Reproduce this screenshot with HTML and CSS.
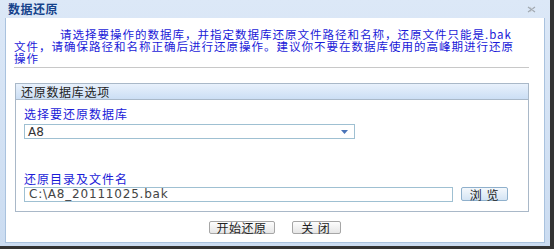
FILE: index.html
```html
<!DOCTYPE html>
<html lang="zh-CN">
  <head>
    <meta charset="UTF-8" />
    <title>数据还原</title>
    <link rel="stylesheet" href="styles.css">
  </head>
  <body>
    <div class="window">
      <div class="title-bar">
        <span class="title">数据还原</span>
        <span class="close">
          <svg width="9" height="7" viewBox="0 0 9 7">
            <path d="M1 1 L8 6 M8 1 L1 6" stroke="#a0a8b0" stroke-width="1.2" fill="none" />
            <path d="M3 1 L6 3.5 L3 6" stroke="#c8ccd0" stroke-width="0.8" fill="none" />
          </svg>
        </span>
      </div>
      <div class="body">
        <div class="intro">
          <div class="intro-line"><span class="indent"></span>请选择要操作的数据库，并指定数据库还原文件路径和名称，还原文件只能是.bak</div>
          <div class="intro-line">文件，请确保路径和名称正确后进行还原操作。建议你不要在数据库使用的高峰期进行还原</div>
          <div class="intro-line">操作</div>
        </div>
        <hr class="sep" />
        <div class="panel">
          <div class="panel-header">还原数据库选项</div>
          <div class="panel-body">
            <label class="field-label">选择要还原数据库</label>
            <div class="select">
              <span>A8</span>
              <svg class="arrow" width="7" height="4" viewBox="0 0 7 4">
                <path d="M0 0 H7 L3.5 4 Z" fill="#4a74b8" />
              </svg>
            </div>
            <label class="field-label path-label">还原目录及文件名</label>
            <div class="path-row">
              <div class="text-input">C:\A8_20111025.bak</div>
              <button class="btn browse">浏 览</button>
            </div>
          </div>
        </div>
        <div class="actions">
          <button class="btn action">开始还原</button>
          <button class="btn action close-btn">关 闭</button>
        </div>
      </div>
    </div>
  </body>
</html>
```

FILE: styles.css
```css
body {
  margin: 0;
  background-color: #333;
  font-family: "Noto Sans CJK SC", sans-serif;
  font-size: 12px;
}
.window {
  width: 550px;
  height: 246px;
  background: linear-gradient(#dce8f7, #cbdcf1);
  display: flex;
  flex-direction: column;
}
.title-bar {
  height: 18px;
  display: flex;
  align-items: center;
  justify-content: space-between;
  padding: 0 14px 0 8px;
}
.title {
  color: #15428b;
  font-weight: bold;
  letter-spacing: 0.5px;
  line-height: 14px;
}
.close {
  display: flex;
  margin-top: 1px;
}
.body {
  flex: 1;
  margin: 0 5px 3px 5px;
  background: #fff;
  border: 1px solid #a9c2de;
  border-top: none;
  padding: 10px 15px 0 8px;
}
.intro {
  color: #1a1ad8;
  letter-spacing: 1px;
  white-space: nowrap;
}
.intro-line {
  height: 12px;
  line-height: 12px;
  font-size: 11.5px;
}
.indent {
  display: inline-block;
  width: 46px;
}
.sep {
  margin: 3px 0 15px 0;
  border: none;
  border-top: 1px solid #c8c8c8;
  height: 0;
}
.panel {
  margin-left: 1px;
  border: 1px solid #a9b8c8;
}
.panel-header {
  height: 15px;
  line-height: 15px;
  padding-left: 5px;
  background: linear-gradient(#e8f1fc, #cbdef4);
  border-bottom: 1px solid #a9b8c8;
  color: #222;
  letter-spacing: 0.7px;
}
.panel-body {
  padding: 7px 20px 9px 8px;
}
.field-label {
  display: block;
  color: #1a1ad8;
  line-height: 14px;
  letter-spacing: 1px;
}
.select {
  margin-top: 3px;
  width: 320px;
  height: 13px;
  border: 1px solid #9fc0d2;
  display: flex;
  align-items: center;
  justify-content: space-between;
  padding: 0 6px 0 3px;
  font-family: "DejaVu Sans", sans-serif;
  font-size: 12px;
  color: #333;
}
.arrow {
  margin-top: 1px;
}
.path-label {
  margin-top: 33px;
}
.path-row {
  margin-top: 1px;
  display: flex;
  align-items: center;
  gap: 8px;
}
.text-input {
  width: 424px;
  height: 13px;
  line-height: 13px;
  border: 1px solid #9fc0d2;
  padding-left: 4px;
  font-family: "DejaVu Sans", sans-serif;
  font-size: 12px;
  letter-spacing: 0.8px;
  color: #444;
}
.btn {
  font-family: "Noto Sans CJK SC", sans-serif;
  font-size: 12px;
  line-height: 11px;
  color: #222;
  padding: 0;
  cursor: pointer;
}
.browse {
  width: 47px;
  height: 14px;
  margin-top: -1px;
  border: 1px solid #8fb0cc;
  border-radius: 2px;
  background: linear-gradient(#f4f8fc, #d4e4f4);
  letter-spacing: 1px;
}
.actions {
  display: flex;
  justify-content: center;
  gap: 17px;
  margin-top: 9px;
  padding-left: 6px;
}
.action {
  width: 66px;
  height: 13px;
  border: 1px solid #a6a6a6;
  border-radius: 2px;
  background: linear-gradient(#fdfdfd, #e6e6e6);
  letter-spacing: 0.5px;
}
.close-btn {
  width: 49px;
  letter-spacing: 1px;
}
```
